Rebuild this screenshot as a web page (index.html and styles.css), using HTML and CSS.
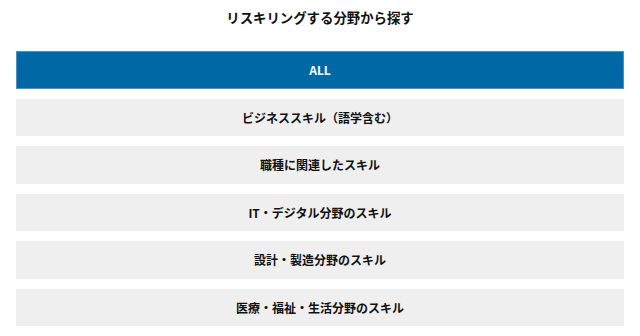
FILE: index.html
```html
<!DOCTYPE html>
<html lang="ja">
<head>
<meta charset="utf-8">
<title>リスキリングする分野から探す</title>
<link rel="stylesheet" href="styles.css">
</head>
<body>
<section class="field-search">
  <h2 class="title">リスキリングする分野から探す</h2>
  <ul class="field-list">
    <li><a class="field-btn is-active" href="#">ALL</a></li>
    <li><a class="field-btn" href="#">ビジネススキル（語学含む）</a></li>
    <li><a class="field-btn" href="#">職種に関連したスキル</a></li>
    <li><a class="field-btn" href="#">IT・デジタル分野のスキル</a></li>
    <li><a class="field-btn" href="#">設計・製造分野のスキル</a></li>
    <li><a class="field-btn" href="#">医療・福祉・生活分野のスキル</a></li>
  </ul>
</section>
</body>
</html>
```

FILE: styles.css
```css
html, body {
  margin: 0;
  padding: 0;
  background: #ffffff;
}

body {
  font-family: "Noto Sans CJK JP", "Noto Sans", sans-serif;
  color: #111111;
}

.field-search {
  padding: 7px 16px 0;
}

.title {
  margin: 0;
  font-size: 13.4px;
  line-height: 20px;
  font-weight: 700;
  text-align: center;
}

.field-list {
  list-style: none;
  margin: 24px 0 0;
  padding: 0;
  display: flex;
  flex-direction: column;
  gap: 10px;
}

.field-btn {
  display: flex;
  align-items: center;
  justify-content: center;
  box-sizing: border-box;
  height: 37.5px;
  background: #efefef;
  color: #111111;
  font-size: 12px;
  font-weight: 700;
  text-decoration: none;
}

.field-btn.is-active {
  background: #0068a5;
  border: 1px solid #4d8fc0;
  color: #ffffff;
}
```
